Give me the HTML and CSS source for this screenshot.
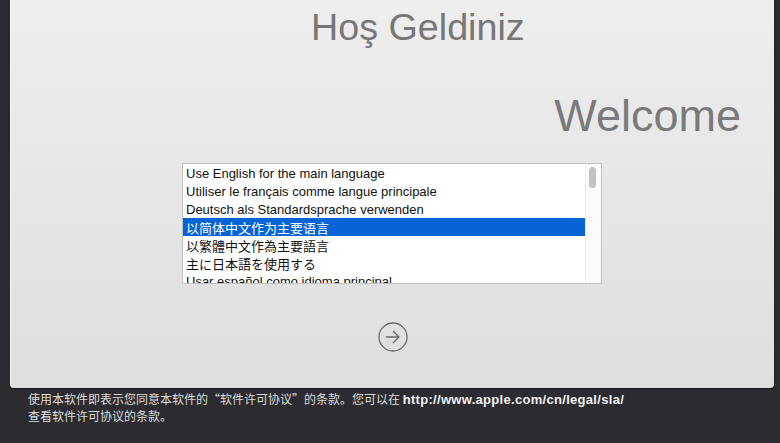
FILE: index.html
```html
<!DOCTYPE html>
<html lang="zh-CN">

<head>
    <meta charset="UTF-8">
    <meta name="viewport" content="width=device-width, initial-scale=1.0">
    <title>Welcome</title>
    <link rel="stylesheet" href="styles.css">
</head>

<body>
    <div class="panel">
        <h1 class="greeting">Hoş Geldiniz</h1>
        <h2 class="welcome">Welcome</h2>

        <div class="listbox">
            <ul class="rows">
                <li>Use English for the main language</li>
                <li>Utiliser le français comme langue principale</li>
                <li>Deutsch als Standardsprache verwenden</li>
                <li class="selected" lang="zh-CN">以简体中文作为主要语言</li>
                <li lang="zh-TW">以繁體中文作為主要語言</li>
                <li lang="ja">主に日本語を使用する</li>
                <li>Usar español como idioma principal</li>
            </ul>
            <div class="scrollbar">
                <div class="thumb"></div>
            </div>
        </div>

        <div class="next">
            <button class="next-btn" aria-label="Continue">
                <svg width="30" height="30" viewBox="0 0 30 30">
                    <circle cx="15" cy="15" r="14" fill="none" stroke="#6a6a6a" stroke-width="1.3" />
                    <path d="M8.5 15 H21 M15.5 9.5 L21 15 L15.5 20.5" fill="none" stroke="#6a6a6a" stroke-width="1.4"
                        stroke-linecap="round" stroke-linejoin="round" />
                </svg>
            </button>
        </div>
    </div>

    <p class="legal">
        使用本软件即表示您同意本软件的“软件许可协议”的条款。您可以在 <b>http://www.apple.com/cn/legal/sla/</b><br>
        查看软件许可协议的条款。
    </p>
</body>

</html>
```

FILE: styles.css
```css
body {
    margin: 0;
    padding: 0;
    height: 443px;
    overflow: hidden;
    background-color: #2c2b30;
    font-family: "Liberation Sans", Arial, "Noto Sans CJK SC", sans-serif;
}

.panel {
    margin: 0 6px 0 10px;
    height: 388px;
    box-sizing: border-box;
    background: linear-gradient(#eeeeee, #dedede);
    border-left: 1px solid #fafafa;
    border-radius: 0 0 4px 4px;
    box-shadow: 0 1px 2px rgba(0, 0, 0, 0.5);
    overflow: hidden;
}

.greeting {
    margin: 0;
    padding: 5px 0 0 300px;
    font-size: 37.7px;
    font-weight: normal;
    line-height: 44px;
    color: #777777;
}

.welcome {
    margin: 0;
    padding: 41px 33px 0 0;
    text-align: right;
    font-size: 45px;
    font-weight: normal;
    line-height: 52px;
    color: #7a7a7a;
}

.listbox {
    display: flex;
    width: 420px;
    height: 121px;
    box-sizing: border-box;
    margin: 21px 0 0 171px;
    border: 1px solid #c2c2c2;
    background-color: #fff;
    overflow: hidden;
}

.rows {
    flex: 1;
    list-style: none;
    margin: 0;
    padding: 0;
}

.rows li {
    height: 18px;
    line-height: 19px;
    padding-left: 3px;
    font-size: 13px;
    color: #111;
    white-space: nowrap;
}

.rows li[lang="zh-CN"] {
    font-family: "Noto Sans CJK SC", sans-serif;
}

.rows li[lang="zh-TW"] {
    font-family: "Noto Sans CJK TC", sans-serif;
}

.rows li[lang="ja"] {
    font-family: "Noto Sans CJK JP", sans-serif;
}

.rows li.selected {
    background-color: #0764d7;
    color: #fff;
}

.scrollbar {
    width: 15px;
    border-left: 1px solid #ececec;
    background-color: #fbfbfb;
}

.thumb {
    width: 7px;
    height: 21px;
    margin: 3px 0 0 3px;
    border-radius: 4px;
    background-color: #c3c3c3;
}

.next {
    display: flex;
    justify-content: center;
    padding: 38px 0 0 0;
}

.next-btn {
    width: 30px;
    height: 30px;
    padding: 0;
    border: 0;
    background: none;
}

.legal {
    margin: 3px 0 0 28px;
    font-family: "Noto Sans CJK SC", sans-serif;
    font-size: 12px;
    line-height: 16px;
    color: #dcdcdc;
}

.legal b {
    font-family: "Liberation Sans", Arial, sans-serif;
    font-size: 13px;
    letter-spacing: 0.3px;
    color: #f2f2f2;
}
```
